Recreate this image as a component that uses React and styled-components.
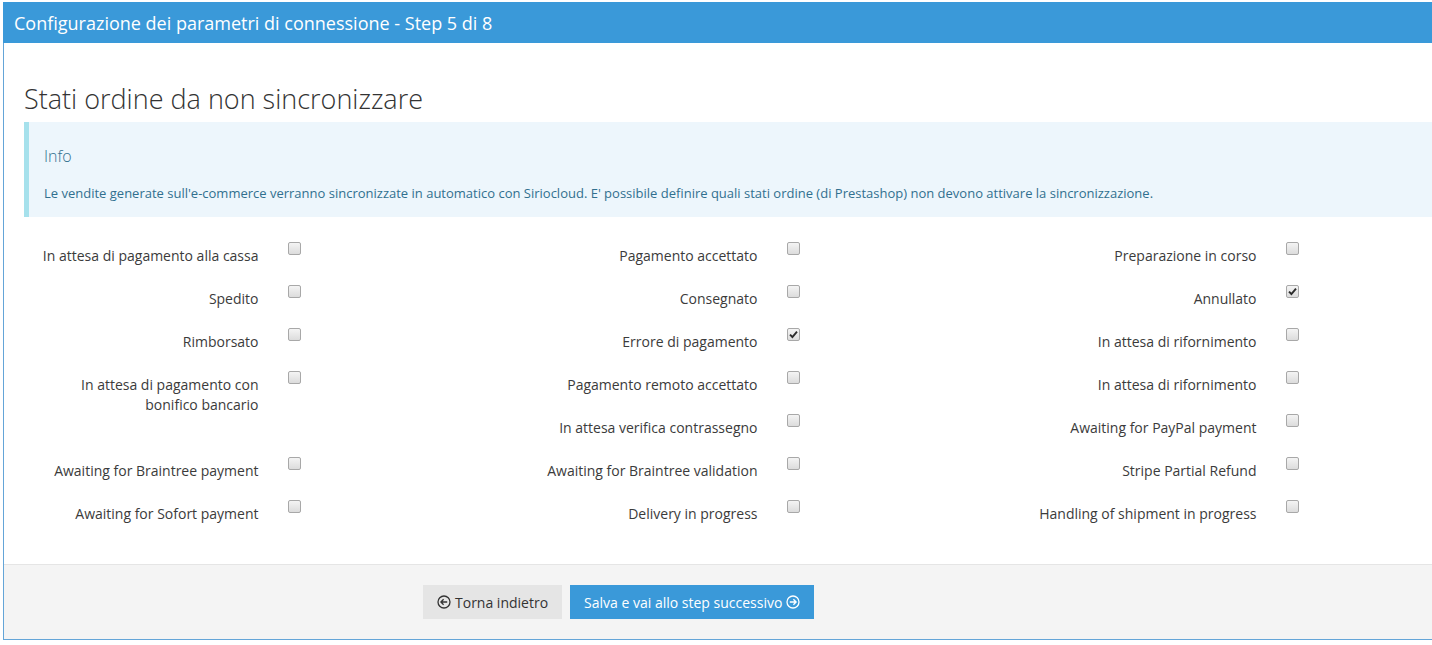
import React from "react";
import styled, { createGlobalStyle } from "styled-components";

const GlobalStyle = createGlobalStyle`
    html, body {
        margin: 0;
        padding: 0;
        overflow: hidden;
        background: #fff;
    }
    body {
        font-family: "Open Sans", "Liberation Sans", sans-serif;
        color: #333;
    }
`;

const Page = styled.div`
    padding: 2px 0 0 3px;
`;

const Panel = styled.section`
    width: 1540px;
    border: 1px solid #64a5d8;
    border-top: none;
    background: #fff;
`;

const PanelHeader = styled.header`
    height: 41px;
    margin-left: -1px;
    padding: 0 11px;
    display: flex;
    align-items: center;
    background: #3a99d9;
    color: #fff;
    font-size: 18px;
`;

const PanelBody = styled.div`
    padding: 36px 20px 28px;
`;

const Title = styled.h2`
    margin: 0 0 3px;
    font-size: 27px;
    font-weight: 300;
    line-height: 40px;
    color: #333;
`;

const Alert = styled.div`
    background: #edf6fc;
    border-left: 5px solid #a6e1ec;
    padding: 23px 15px 15px;
    color: #31708f;
`;

const AlertHeading = styled.h4`
    margin: 0 0 18px;
    font-size: 16px;
    font-weight: 300;
    line-height: 22px;
`;

const AlertText = styled.p`
    margin: 0;
    font-size: 13px;
    line-height: 17px;
`;

const StatusGrid = styled.div`
    margin-top: 18px;
    width: 1497px;
    display: grid;
    grid-template-columns: repeat(3, 1fr);
    grid-auto-rows: 43px;
`;

const StatusItem = styled.label`
    display: grid;
    grid-template-columns: 1fr 1fr;
    grid-row: span ${(p) => p.$span || 1};
    align-items: start;
`;

const StatusLabel = styled.span`
    padding: 11px 15px 0 15px;
    text-align: right;
    font-size: 14px;
    line-height: 20px;
    color: #3b3b3b;
`;

const Box = styled.span`
    margin: 7px 0 0 14px;
    width: 11px;
    height: 11px;
    border: 1px solid #a8a8a8;
    border-radius: 2px;
    background: linear-gradient(#f4f4f4, #dcdcdc);
    display: flex;
    align-items: center;
    justify-content: center;
`;

const Footer = styled.div`
    border-top: 1px solid #e5e5e5;
    background: #f4f4f4;
    padding: 20px 0 20px 419px;
    display: flex;
    gap: 8px;
`;

const Button = styled.button`
    height: 34px;
    padding: 0 14px;
    border: none;
    border-radius: 0;
    display: flex;
    align-items: center;
    gap: 4px;
    font-family: "Open Sans", "Liberation Sans", sans-serif;
    font-size: 14px;
    background: ${(p) => (p.$primary ? "#3a99d9" : "#e5e5e5")};
    color: ${(p) => (p.$primary ? "#fff" : "#333")};
    cursor: pointer;
`;

const Check = () => (
    <svg width="9" height="9" viewBox="0 0 9 9">
        <path d="M1 4.6 L3.4 7 L8 1.6" fill="none" stroke="#2b2b2b" strokeWidth="1.9" />
    </svg>
);

const CircleArrow = ({ dir }) => (
    <svg width="14" height="14" viewBox="0 0 14 14">
        <circle cx="7" cy="7" r="6" fill="none" stroke="currentColor" strokeWidth="1.3" />
        {dir === "left" ? (
            <path d="M10.2 7 H4 M6.6 4.3 L3.9 7 L6.6 9.7" fill="none" stroke="currentColor" strokeWidth="1.3" />
        ) : (
            <path d="M3.8 7 H10 M7.4 4.3 L10.1 7 L7.4 9.7" fill="none" stroke="currentColor" strokeWidth="1.3" />
        )}
    </svg>
);

const statuses = [
    { label: "In attesa di pagamento alla cassa" },
    { label: "Pagamento accettato" },
    { label: "Preparazione in corso" },
    { label: "Spedito" },
    { label: "Consegnato" },
    { label: "Annullato", checked: true },
    { label: "Rimborsato" },
    { label: "Errore di pagamento", checked: true },
    { label: "In attesa di rifornimento" },
    { label: "In attesa di pagamento con bonifico bancario", span: 2 },
    { label: "Pagamento remoto accettato" },
    { label: "In attesa di rifornimento" },
    { label: "In attesa verifica contrassegno" },
    { label: "Awaiting for PayPal payment" },
    { label: "Awaiting for Braintree payment" },
    { label: "Awaiting for Braintree validation" },
    { label: "Stripe Partial Refund" },
    { label: "Awaiting for Sofort payment" },
    { label: "Delivery in progress" },
    { label: "Handling of shipment in progress" },
];

export default function App() {
    return (
        <>
            <GlobalStyle />
            <Page>
                <Panel>
                    <PanelHeader>Configurazione dei parametri di connessione - Step 5 di 8</PanelHeader>
                    <PanelBody>
                        <Title>Stati ordine da non sincronizzare</Title>
                        <Alert>
                            <AlertHeading>Info</AlertHeading>
                            <AlertText>
                                Le vendite generate sull'e-commerce verranno sincronizzate in automatico con Siriocloud. E' possibile definire quali stati ordine (di Prestashop) non devono attivare la sincronizzazione.
                            </AlertText>
                        </Alert>
                        <StatusGrid>
                            {statuses.map((s, i) => (
                                <StatusItem key={i} $span={s.span}>
                                    <StatusLabel>{s.label}</StatusLabel>
                                    <Box>{s.checked && <Check />}</Box>
                                </StatusItem>
                            ))}
                        </StatusGrid>
                    </PanelBody>
                    <Footer>
                        <Button>
                            <CircleArrow dir="left" />
                            Torna indietro
                        </Button>
                        <Button $primary>
                            Salva e vai allo step successivo
                            <CircleArrow dir="right" />
                        </Button>
                    </Footer>
                </Panel>
            </Page>
        </>
    );
}
